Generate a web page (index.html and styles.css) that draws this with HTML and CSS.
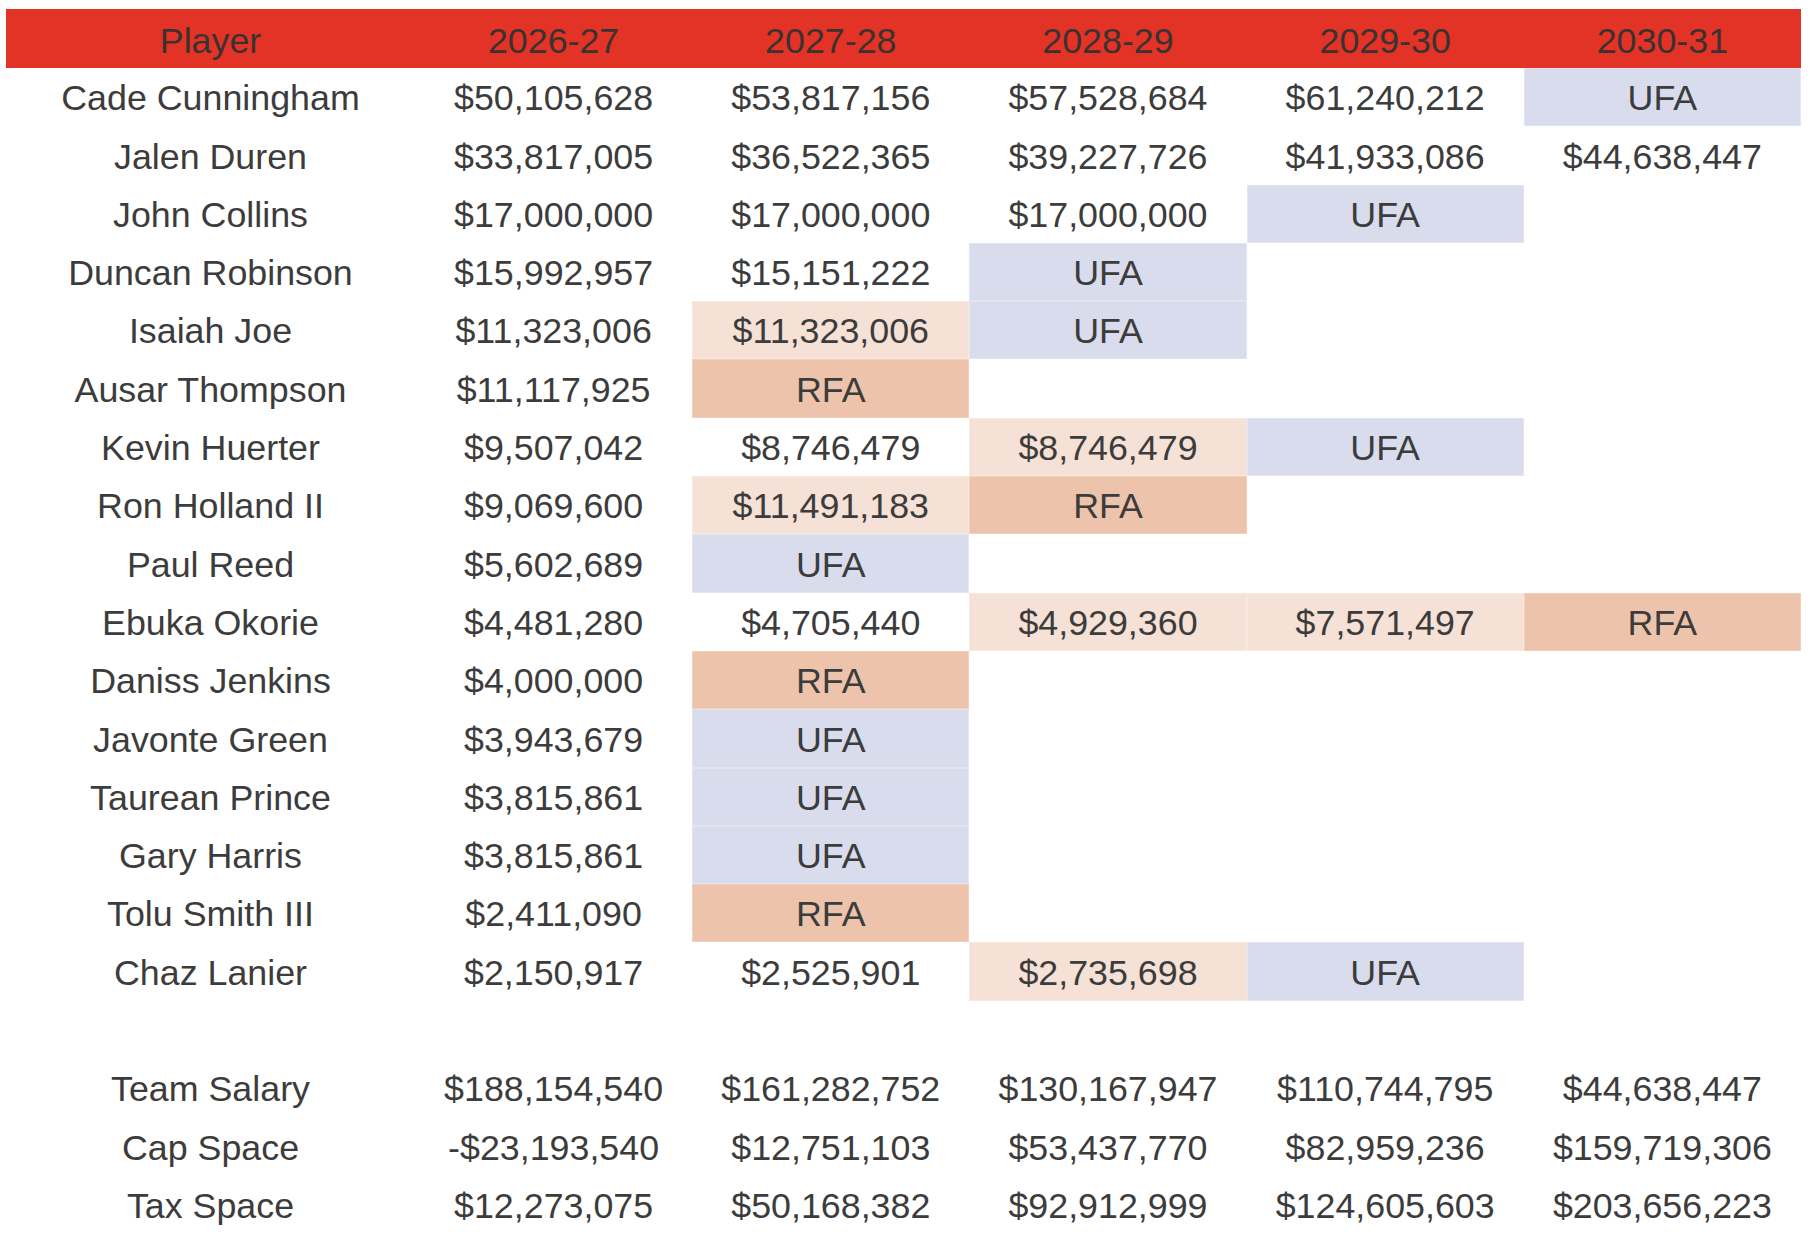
FILE: index.html
```html
<!DOCTYPE html>
<html lang="en">
<head>
    <meta charset="UTF-8">
    <meta name="viewport" content="width=device-width, initial-scale=1.0">
    <title>Pistons Salary Sheet</title>
    <link rel="stylesheet" href="styles.css">
</head>
<body>
    <table class="cap-table">
        <colgroup>
            <col class="col-player">
            <col class="col-year"><col class="col-year"><col class="col-year"><col class="col-year"><col class="col-year">
        </colgroup>
        <thead>
            <tr>
                <th>Player</th><th>2026-27</th><th>2027-28</th><th>2028-29</th><th>2029-30</th><th>2030-31</th>
            </tr>
        </thead>
        <tbody>
            <tr><td>Cade Cunningham</td><td>$50,105,628</td><td>$53,817,156</td><td>$57,528,684</td><td>$61,240,212</td><td class="ufa">UFA</td></tr>
            <tr><td>Jalen Duren</td><td>$33,817,005</td><td>$36,522,365</td><td>$39,227,726</td><td>$41,933,086</td><td>$44,638,447</td></tr>
            <tr><td>John Collins</td><td>$17,000,000</td><td>$17,000,000</td><td>$17,000,000</td><td class="ufa">UFA</td><td></td></tr>
            <tr><td>Duncan Robinson</td><td>$15,992,957</td><td>$15,151,222</td><td class="ufa">UFA</td><td></td><td></td></tr>
            <tr><td>Isaiah Joe</td><td>$11,323,006</td><td class="option">$11,323,006</td><td class="ufa">UFA</td><td></td><td></td></tr>
            <tr><td>Ausar Thompson</td><td>$11,117,925</td><td class="rfa">RFA</td><td></td><td></td><td></td></tr>
            <tr><td>Kevin Huerter</td><td>$9,507,042</td><td>$8,746,479</td><td class="option">$8,746,479</td><td class="ufa">UFA</td><td></td></tr>
            <tr><td>Ron Holland II</td><td>$9,069,600</td><td class="option">$11,491,183</td><td class="rfa">RFA</td><td></td><td></td></tr>
            <tr><td>Paul Reed</td><td>$5,602,689</td><td class="ufa">UFA</td><td></td><td></td><td></td></tr>
            <tr><td>Ebuka Okorie</td><td>$4,481,280</td><td>$4,705,440</td><td class="option">$4,929,360</td><td class="option">$7,571,497</td><td class="rfa">RFA</td></tr>
            <tr><td>Daniss Jenkins</td><td>$4,000,000</td><td class="rfa">RFA</td><td></td><td></td><td></td></tr>
            <tr><td>Javonte Green</td><td>$3,943,679</td><td class="ufa">UFA</td><td></td><td></td><td></td></tr>
            <tr><td>Taurean Prince</td><td>$3,815,861</td><td class="ufa">UFA</td><td></td><td></td><td></td></tr>
            <tr><td>Gary Harris</td><td>$3,815,861</td><td class="ufa">UFA</td><td></td><td></td><td></td></tr>
            <tr><td>Tolu Smith III</td><td>$2,411,090</td><td class="rfa">RFA</td><td></td><td></td><td></td></tr>
            <tr><td>Chaz Lanier</td><td>$2,150,917</td><td>$2,525,901</td><td class="option">$2,735,698</td><td class="ufa">UFA</td><td></td></tr>
            <tr class="spacer"><td></td><td></td><td></td><td></td><td></td><td></td></tr>
            <tr><td>Team Salary</td><td>$188,154,540</td><td>$161,282,752</td><td>$130,167,947</td><td>$110,744,795</td><td>$44,638,447</td></tr>
            <tr><td>Cap Space</td><td>-$23,193,540</td><td>$12,751,103</td><td>$53,437,770</td><td>$82,959,236</td><td>$159,719,306</td></tr>
            <tr><td>Tax Space</td><td>$12,273,075</td><td>$50,168,382</td><td>$92,912,999</td><td>$124,605,603</td><td>$203,656,223</td></tr>
        </tbody>
    </table>
</body>
</html>
```

FILE: styles.css
```css
body {
    margin: 0;
    padding: 9px 13px 0 6px;
    background-color: #ffffff;
    font-family: "Liberation Sans", Arial, sans-serif;
    color: #3c3c3c;
}

.cap-table {
    width: 1795px;
    table-layout: fixed;
    border-collapse: collapse;
    border-spacing: 0;
}
.col-player {
    width: 409px;
}
.col-year {
    width: 277.2px;
}

.cap-table th,
.cap-table td {
    padding: 0;
    text-align: center;
    vertical-align: middle;
    font-size: 35.8px;
    font-weight: normal;
    white-space: nowrap;
    line-height: 1;
}
.cap-table th {
    height: 52px;
    padding-top: 7px;
    background-color: #e33226;
    color: #3a3230;
}
.cap-table td {
    height: 54.3px;
    padding-top: 4px;
}

/* contract status colours */
.ufa {
    background-color: #d8dced;
    box-shadow: inset 0 0 0 1px #e3e6f2;
}
.rfa {
    background-color: #edc4ab;
    box-shadow: inset 0 0 0 1px #f1d0bd;
}
.option {
    background-color: #f5e1d5;
    box-shadow: inset 0 0 0 1px #f8e8de;
}
```
